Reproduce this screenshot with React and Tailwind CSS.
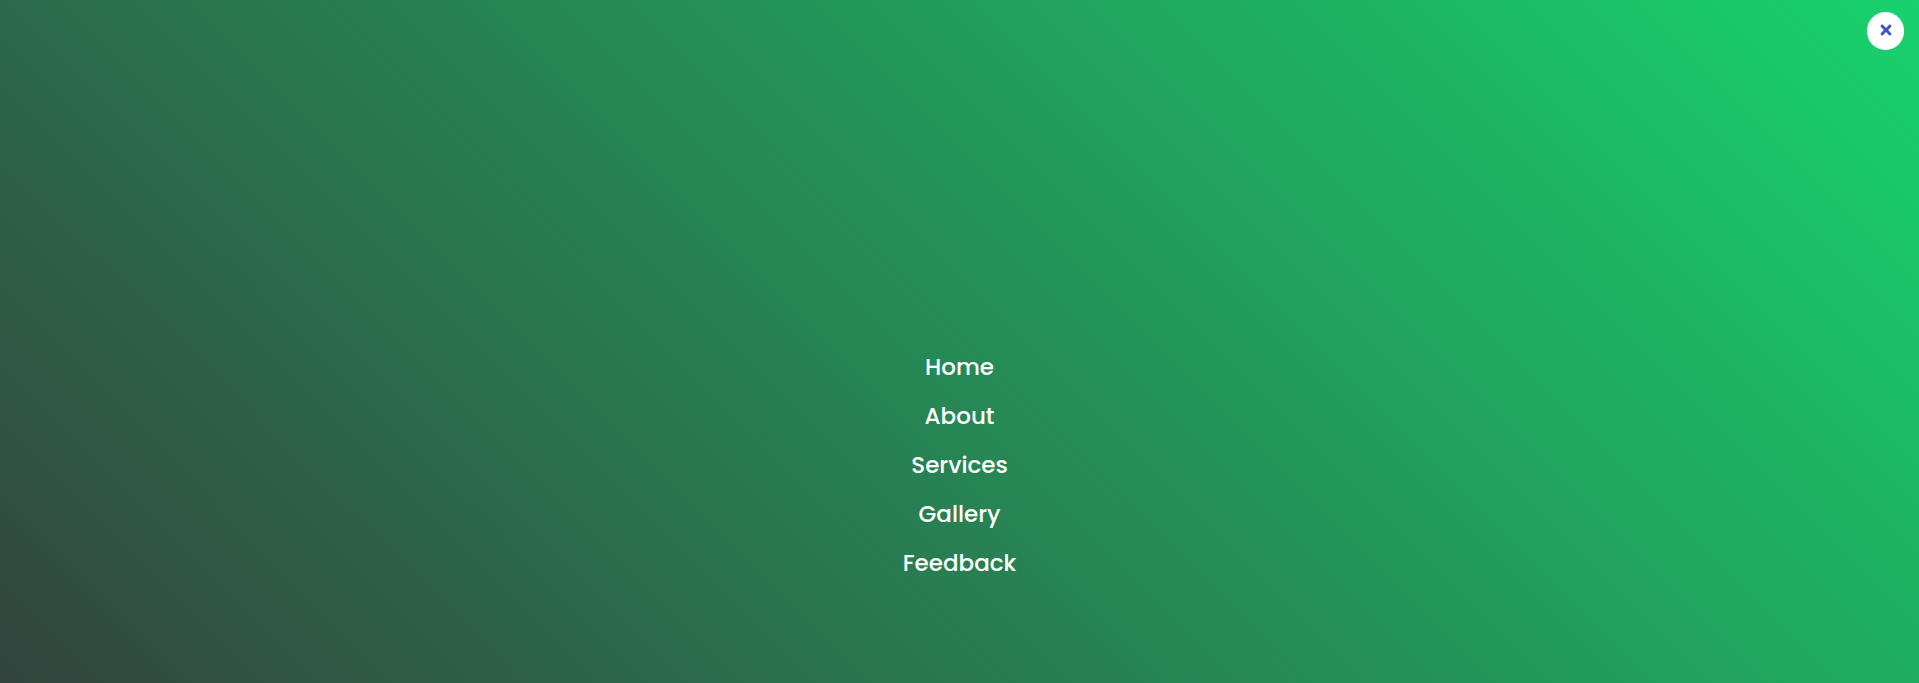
import React from "react";
import { FaTimes } from "react-icons/fa";

const links = ["Home", "About", "Services", "Gallery", "Feedback"];

export default function App() {
  return (
    <div className="flex min-h-screen flex-col bg-[linear-gradient(45deg,#33443e,#18d26e)] font-['Poppins','Inter',sans-serif]">
      <header className="flex justify-end px-[15px] pt-3">
        <button
          type="button"
          aria-label="Close menu"
          className="flex h-[38px] w-[37px] items-center justify-center rounded-full bg-white pb-0.5 text-base text-[#3f51c4]"
        >
          <FaTimes aria-hidden="true" />
        </button>
      </header>
      <nav aria-label="Main" className="flex grow flex-col justify-end pb-[95px]">
        <ul className="flex flex-col items-center">
          {links.map((label) => (
            <li key={label}>
              <a
                href={"#" + label.toLowerCase()}
                className="block text-[23px] leading-[49px] font-medium text-white"
              >
                {label}
              </a>
            </li>
          ))}
        </ul>
      </nav>
    </div>
  );
}
